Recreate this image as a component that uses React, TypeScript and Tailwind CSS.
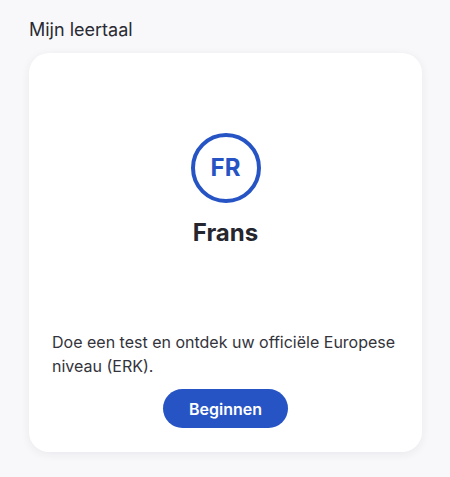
export default function App() {
  return (
    <div
      className="min-h-[477px] bg-[#f8f8fa] px-[29px] pt-[18px]"
      style={{ fontFamily: "Inter, 'Noto Sans', sans-serif" }}
    >
      <h2 className="text-[18px] leading-6 text-[#2a2a33]">Mijn leertaal</h2>
      <div className="mt-[11px] flex h-[399px] w-[393px] flex-col rounded-[20px] bg-white px-[23px] pb-[24px] shadow-[0_2px_10px_rgba(40,40,80,0.07)]">
        <div className="flex flex-1 flex-col items-center justify-center">
          <div className="flex h-[70px] w-[70px] items-center justify-center rounded-full border-4 border-[#2654c4]">
            <span className="text-[24px] font-bold text-[#2654c4]">FR</span>
          </div>
          <p className="mt-[12px] text-[24px] font-bold text-[#26262e]">Frans</p>
        </div>
        <p className="text-[16px] leading-6 text-[#33333b]">
          Doe een test en ontdek uw officiële Europese niveau (ERK).
        </p>
        <div className="mt-[11px] flex justify-center">
          <button className="h-[39px] w-[125px] rounded-full bg-[#2654c4] text-[16px] font-semibold text-white">
            Beginnen
          </button>
        </div>
      </div>
    </div>
  );
}
